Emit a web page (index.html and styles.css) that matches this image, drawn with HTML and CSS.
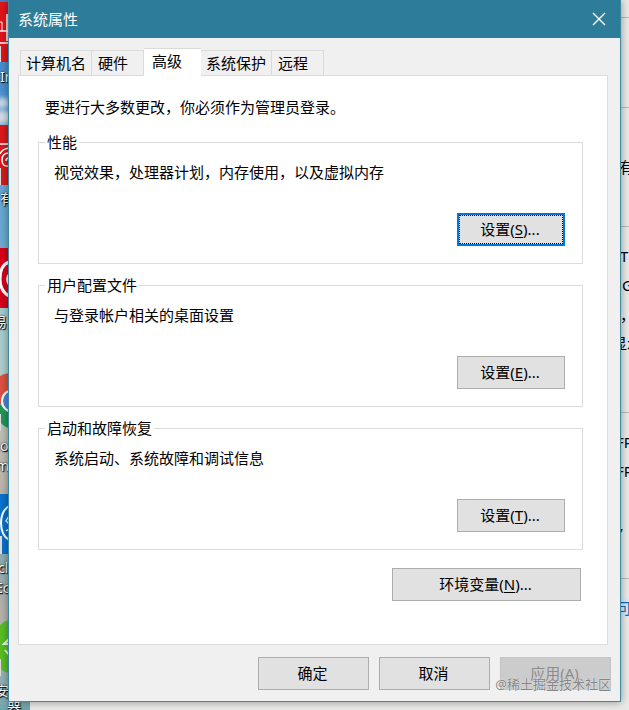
FILE: index.html
```html
<!DOCTYPE html>
<html lang="zh-CN">
<head>
<meta charset="utf-8">
<meta name="viewport" content="width=device-width, initial-scale=1">
<title>系统属性</title>
<link rel="stylesheet" href="styles.css">
</head>
<body>
<div class="desktop" aria-hidden="true">
  <div class="wallpaper">
    <svg class="shortcuts" width="30" height="710" viewBox="0 0 30 710">
      <defs><filter id="soft"><feGaussianBlur stdDeviation="2"/></filter></defs>
      <g filter="url(#soft)">
        <ellipse cx="2" cy="103" rx="8" ry="5" fill="#c9d8e8"/>
        <ellipse cx="3" cy="117" rx="9" ry="6" fill="#d6dce2"/>
      </g>
      <rect y="2" width="9" height="60" fill="#df151b"/>
      <path d="M7 14V41M0 31H9M0 43H9" stroke="#fff" stroke-width="1.6" fill="none"/>
      <path d="M0 22H2V31" stroke="#fff" fill="none"/>
      <rect y="46" width="1" height="16" fill="#ddd"/>
      <rect y="125" width="9" height="60" fill="#d9191c"/>
      <path d="M0 144H9M9 148Q2 149 0 154M9 153Q2 153 2 160T9 166M9 158Q6 158 6 161" stroke="#fff" stroke-width="1.5" fill="none"/>
      <rect y="168" width="1" height="17" fill="#ddd"/>
      <rect y="248" width="9" height="60" fill="#d7001b"/>
      <path d="M9 262Q0 265 0 279Q0 291 9 296" stroke="#fff" stroke-width="3" fill="none"/>
      <path d="M9 274Q5 279 9 285" stroke="#fff" stroke-width="2" fill="none"/>
      <path d="M0 376Q4 374 9 373V390L0 405Z" fill="#dc5142"/>
      <path d="M0 404L9 412V428Q4 427 0 422Z" fill="#219858"/>
      <circle cx="13" cy="401" r="11" fill="#4d84df" stroke="#fff" stroke-width="2"/>
      <rect y="414" width="1" height="17" fill="#ddd"/>
      <rect y="494" width="9" height="60" fill="#0871cf"/>
      <path d="M9 506Q1 511 1 523T9 540" stroke="#fff" stroke-width="2" fill="none"/>
      <path d="M9 516L6 521L9 524M9 529L6 531" stroke="#fff" stroke-width="1.4" fill="none"/>
      <rect y="536" width="2" height="18" fill="#ddd"/>
      <path d="M0 625Q4 621 9 620V673Q3 672 0 668Z" fill="#5abd24"/>
      <path d="M9 639L4 644H9M5 650L9 655" stroke="#eaffdd" stroke-width="2" fill="none"/>
      <rect y="659" width="1" height="17" fill="#ddd"/>
    </svg>
    <span class="caption caption-1">In</span>
    <span class="caption caption-2">有</span>
    <span class="caption caption-3">易</span>
    <span class="caption caption-4">o</span>
    <span class="caption caption-5">m</span>
    <span class="caption caption-6">cl</span>
    <span class="caption caption-7">Ec</span>
    <span class="caption caption-8">安</span>
    <span class="caption caption-9">器</span>
  </div>
  <div class="document">
    <i class="rule rule-1"></i><i class="rule rule-2"></i><i class="rule rule-3"></i><i class="rule rule-4"></i><i class="rule rule-5"></i>
    <span class="line line-1">有</span>
    <span class="line line-2">T</span>
    <span class="line line-3">G</span>
    <span class="line line-4">，</span>
    <span class="line line-5">显示</span>
    <span class="line line-6">FP</span>
    <span class="line line-7">FP</span>
    <span class="line line-8">’</span>
    <span class="line line-9">可</span>
  </div>
</div>

<main class="dialog" role="dialog" aria-labelledby="dialog-title">
  <header class="titlebar">
    <h1 id="dialog-title">系统属性</h1>
    <button class="close" type="button" aria-label="关闭">
      <svg width="14" height="14" viewBox="0 0 14 14"><path d="M1 1L13 13M13 1L1 13" stroke="#fff" stroke-width="1.4" fill="none"/></svg>
    </button>
  </header>
  <div class="tabs" role="tablist">
    <button class="tab" type="button" role="tab">计算机名</button>
    <button class="tab tab-wide" type="button" role="tab">硬件</button>
    <button class="tab tab-active" type="button" role="tab" aria-selected="true">高级</button>
    <button class="tab" type="button" role="tab">系统保护</button>
    <button class="tab tab-wide" type="button" role="tab">远程</button>
  </div>
  <section class="panel" role="tabpanel">
    <p class="notice">要进行大多数更改，你必须作为管理员登录。</p>
    <div class="groups">
      <fieldset class="group">
        <legend>性能</legend>
        <p>视觉效果，处理器计划，内存使用，以及虚拟内存</p>
        <button class="button button-focus" type="button">设置(<u>S</u>)...</button>
      </fieldset>
      <fieldset class="group">
        <legend>用户配置文件</legend>
        <p>与登录帐户相关的桌面设置</p>
        <button class="button" type="button">设置(<u>E</u>)...</button>
      </fieldset>
      <fieldset class="group">
        <legend>启动和故障恢复</legend>
        <p>系统启动、系统故障和调试信息</p>
        <button class="button" type="button">设置(<u>T</u>)...</button>
      </fieldset>
    </div>
    <button class="button button-env" type="button">环境变量(<u>N</u>)...</button>
  </section>
  <footer class="actions">
    <button class="button button-action" type="button">确定</button>
    <button class="button button-action" type="button">取消</button>
    <button class="button button-action" type="button" disabled>应用(A)</button>
    <span class="watermark">@稀土掘金技术社区</span>
  </footer>
</main>
</body>
</html>
```
FILE: styles.css
```css
* {
  box-sizing: border-box;
}

body {
  margin: 0;
  position: relative;
  overflow: hidden;
  padding: 0 8px 8px;
  font: 15px/20px "Noto Sans", "Noto Sans CJK SC", sans-serif;
  color: #000;
}

h1, p {
  margin: 0;
  font-size: 15px;
  font-weight: 400;
}

button {
  font: inherit;
  color: inherit;
}

/* Desktop behind the dialog */
.desktop {
  position: absolute;
  inset: 0;
  display: flex;
  overflow: hidden;
  background: #e9e9e8;
}

.wallpaper {
  position: relative;
  flex: 0 0 30px;
  overflow: hidden;
  background: linear-gradient(#3f84c6 0, #4b90d0 90px, #86b6dc 122px, #67a6d4 190px, #6caad0 240px, #a5cbd2 310px, #b1cdca 370px, #bcc0b3 430px, #c1b7ac 480px, #8fa9b2 565px, #b9b3aa 610px, #8fb0b4 690px, #6fa5ac 710px);
}

.shortcuts {
  display: block;
}

.caption {
  position: absolute;
  left: 0;
  color: #fff;
  font-size: 14px;
  line-height: 18px;
  white-space: nowrap;
  text-shadow: 1px 1px 1px #000, 0 0 2px #000;
}

.caption-1 { top: 68px; }
.caption-2 { top: 190px; }
.caption-3 { top: 313px; left: -7px; }
.caption-4 { top: 437px; }
.caption-5 { top: 457px; left: -4px; }
.caption-6 { top: 559px; left: -2px; }
.caption-7 { top: 579px; left: -5px; }
.caption-8 { top: 682px; left: -5px; }
.caption-9 { top: 699px; left: 7px; }

.document {
  position: relative;
  flex: 1;
}

.rule {
  position: absolute;
  right: 0;
  width: 8px;
  height: 1px;
  background: #b9b9b9;
}

.rule-1 { top: 17px; }
.rule-2 { top: 107px; }
.rule-3 { top: 226px; }
.rule-4 { top: 412px; }
.rule-5 { top: 578px; }

.line {
  position: absolute;
  left: calc(100% - 9px);
  white-space: nowrap;
}

.line-1 { top: 157px; left: calc(100% - 10px); }
.line-2 { top: 246px; }
.line-3 { top: 275px; left: calc(100% - 7px); }
.line-4 { top: 305px; }
.line-5 { top: 333px; left: calc(100% - 17px); }
.line-6 { top: 432px; left: calc(100% - 13px); }
.line-7 { top: 461px; left: calc(100% - 13px); }
.line-8 { top: 523px; }
.line-9 { top: 598px; left: calc(100% - 12px); color: #1767ad; background: #d9eafa; }

/* Dialog */
.dialog {
  position: relative;
  border: 1px solid #3c8aa1;
  border-top: 0;
  background: #f0f0f0;
  box-shadow: 0 0 8px rgba(0, 0, 0, .4);
}

.titlebar {
  display: flex;
  align-items: center;
  justify-content: space-between;
  height: 38px;
  padding: 0 14px 0 9px;
  background: #2d7d9a;
  color: #fff;
}

.close {
  display: flex;
  padding: 0;
  border: 0;
  background: none;
}

.tabs {
  display: flex;
  align-items: flex-end;
  margin: 10px 11px 0;
}

.tab {
  height: 25px;
  padding: 0 5px;
  border: 1px solid #dadada;
  border-bottom: 0;
  border-left-width: 0;
  background: #f0f0f0;
  white-space: nowrap;
}

.tab:first-child {
  border-left-width: 1px;
}

.tab-wide {
  padding: 0 15px 0 6px;
}

.tab-active {
  position: relative;
  height: 28px;
  margin-bottom: -1px;
  padding: 0 19px 3px 8px;
  border-width: 1px 0 0;
  background: #fff;
}

.panel {
  display: flex;
  flex-direction: column;
  margin: 0 12px 0 9px;
  padding: 21px 24px 43px 19px;
  border: 1px solid #dcdcdc;
  background: #fff;
}

.notice {
  padding-left: 7px;
}

.groups {
  display: grid;
  gap: 11px;
  margin-top: 15px;
}

.group {
  min-width: 0;
  margin: 0;
  padding: 10px 17px 17px 15px;
  border: 1px solid #dcdcdc;
}

.group legend {
  margin-left: -9px;
  padding: 0 2px;
}

.group .button {
  display: block;
  width: 108px;
  margin: 31px 0 0 auto;
}

.button {
  height: 33px;
  padding: 0 2px 2px 0;
  border: 1px solid #adadad;
  background: #e1e1e1;
}

.button u {
  text-underline-offset: 2px;
}

.button-focus {
  border: 2px solid #0078d7;
  outline: 1px dotted #000;
  outline-offset: -3px;
}

.button-env {
  align-self: flex-end;
  width: 189px;
  margin: 18px 2px 0 0;
}

.actions {
  position: relative;
  display: flex;
  justify-content: flex-end;
  gap: 10px;
  padding: 12px 9px 11px;
}

.button-action {
  width: 111px;
}

.button:disabled {
  border-color: #c4c4c4;
  background: #cccccc;
  color: #8c8c8c;
}

.watermark {
  position: absolute;
  right: 9px;
  bottom: 7px;
  color: #858585;
  font-size: 13px;
  text-shadow: 0 0 1px #fff;
  white-space: nowrap;
}
```
